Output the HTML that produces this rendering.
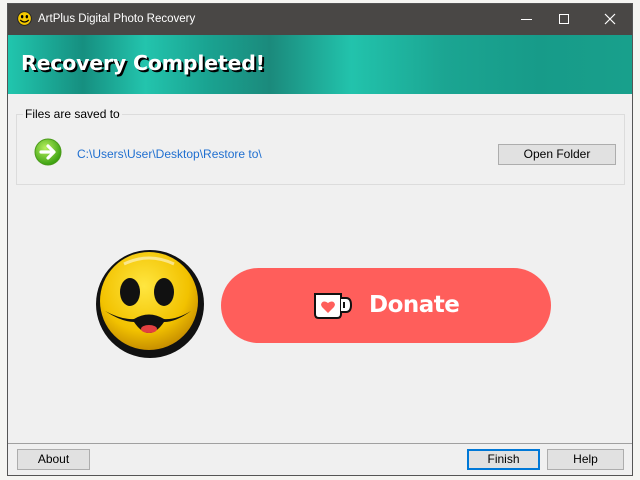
<!DOCTYPE html>
<html><head><meta charset="utf-8"><style>
*{margin:0;padding:0;box-sizing:border-box}
body{width:640px;height:480px;background:#f5f5f2;position:relative;overflow:hidden;font-family:"Liberation Sans",sans-serif;font-size:12px;color:#000}
.win{position:absolute;left:7px;top:3px;width:626px;height:473px;background:#f0f0f0;border:1px solid #555}
.title{position:absolute;left:0;top:0;width:100%;height:31px;background:#494745;color:#fff;font-size:11.5px}
.hdr{position:absolute;left:0;top:31px;width:100%;height:59px;background:linear-gradient(90deg,#21c6ae 0%,#168f80 12%,#23c4ad 22%,#1aa391 32%,#1b8a7c 42%,#22c3ac 55%,#1ba592 70%,#179b89 85%,#18a08c 100%)}
.hdr h1{position:absolute;left:13px;top:16px;font-family:"DejaVu Sans",sans-serif;font-size:20.5px;font-weight:bold;color:#fff;text-shadow:2px 2px 0 #000;letter-spacing:-0.2px}
.btn{position:absolute;height:21px;background:#e1e1e1;border:1px solid #adadad;text-align:center;line-height:19px;font-size:12px}
</style></head><body>
<div class="win">
 <div class="title">
  <svg style="position:absolute;left:9px;top:7px" width="15" height="15" viewBox="0 0 16 16"><circle cx="8" cy="8" r="7.3" fill="#f5c800" stroke="#222" stroke-width="1"/><ellipse cx="5.5" cy="6" rx="1.3" ry="1.8" fill="#000"/><ellipse cx="10.5" cy="6" rx="1.3" ry="1.8" fill="#000"/><path d="M3.5 9.5 Q8 14 12.5 9.5" stroke="#000" stroke-width="1.3" fill="none"/></svg>
  <div style="position:absolute;left:30px;top:9px">ArtPlus Digital Photo Recovery</div>
  <div style="position:absolute;left:513px;top:15px;width:11px;height:1px;background:#fff"></div>
  <div style="position:absolute;left:551px;top:10px;width:10px;height:10px;border:1px solid #fff"></div>
  <svg style="position:absolute;left:596px;top:9px" width="12" height="12"><path d="M1 1L11 11M11 1L1 11" stroke="#fff" stroke-width="1.2"/></svg>
 </div>
 <div class="hdr"><h1>Recovery Completed!</h1></div>
 <div style="position:absolute;left:8px;top:110px;width:609px;height:71px;border:1px solid #dcdcdc"></div>
 <div style="position:absolute;left:15px;top:103px;background:#f0f0f0;padding:0 2px">Files are saved to</div>
 <svg style="position:absolute;left:25px;top:133px" width="30" height="30" viewBox="0 0 30 30"><defs><radialGradient id="g" cx="40%" cy="35%" r="65%"><stop offset="0" stop-color="#b8f060"/><stop offset="1" stop-color="#3aa010"/></radialGradient></defs><circle cx="15" cy="15" r="13" fill="url(#g)" stroke="#4a9a1a"/><path d="M8 15H20M15 9L21 15L15 21" stroke="#fff" stroke-width="3.2" fill="none" stroke-linecap="round" stroke-linejoin="round"/></svg>
 <div style="position:absolute;left:69px;top:143px;color:#1f6fd0">C:\Users\User\Desktop\Restore to\</div>
 <div class="btn" style="left:490px;top:140px;width:118px">Open Folder</div>
 <svg style="position:absolute;left:86px;top:244px" width="112" height="112" viewBox="0 0 112 112"><defs><radialGradient id="y" cx="45%" cy="35%" r="65%"><stop offset="0" stop-color="#ffe640"/><stop offset="0.7" stop-color="#f2c200"/><stop offset="1" stop-color="#c89000"/></radialGradient></defs><circle cx="56" cy="56" r="54" fill="#111"/><circle cx="55" cy="53" r="49" fill="url(#y)"/><ellipse cx="36" cy="44" rx="10" ry="14" fill="#111"/><ellipse cx="70" cy="44" rx="10" ry="14" fill="#111"/><path d="M11 63 Q28 74 40 74 Q55 96 70 74 Q82 74 97 63 Q82 72 70 71 Q55 62 40 71 Q28 72 11 63Z" fill="#111"/><ellipse cx="55" cy="81" rx="8" ry="4" fill="#e24040"/><path d="M30 16 Q55 4 80 16" stroke="#fff" stroke-opacity=".5" stroke-width="3" fill="none"/></svg>
 <div style="position:absolute;left:213px;top:264px;width:330px;height:75px;border-radius:38px;background:#ff5e5b"></div>
 <svg style="position:absolute;left:305px;top:288px" width="42" height="28" viewBox="0 0 42 28"><path d="M2 2H28V22Q28 26 24 26H6Q2 26 2 22Z" fill="#fff" stroke="#111" stroke-width="2"/><path d="M28 6H33Q38 6 38 13Q38 20 33 20H28" fill="#fff" stroke="#111" stroke-width="2"/><path d="M31 10V16" stroke="#111" stroke-width="2"/><path d="M15 21L9 15Q7 12 9.5 10Q12 8.5 15 11Q18 8.5 20.5 10Q23 12 21 15Z" fill="#ff5e5b"/></svg>
 <div style="position:absolute;left:361px;top:288px;color:#fff;font-weight:bold;font-size:23px;font-family:'DejaVu Sans',sans-serif;letter-spacing:-0.5px">Donate</div>
 <div style="position:absolute;left:0;top:439px;width:100%;height:1px;background:#a0a0a0"></div>
 <div class="btn" style="left:9px;top:445px;width:73px">About</div>
 <div class="btn" style="left:459px;top:445px;width:73px;border:2px solid #0078d7;line-height:17px">Finish</div>
 <div class="btn" style="left:539px;top:445px;width:77px">Help</div>
</div>
</body></html>
